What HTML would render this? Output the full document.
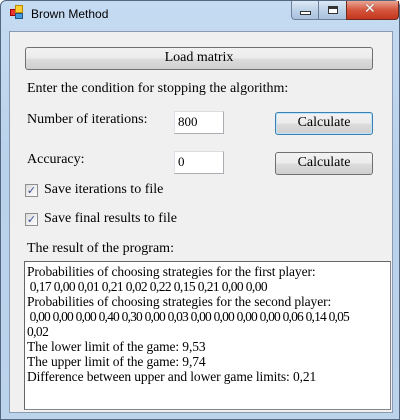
<!DOCTYPE html><html><head><style>
*{margin:0;padding:0;box-sizing:border-box}
body{width:400px;height:420px;overflow:hidden;background:#fff;font-family:"Liberation Serif","Times New Roman",serif;font-size:14px;color:#000}
.win{position:absolute;left:0;top:0;width:400px;height:420px;background:linear-gradient(#c5dbf2,#b9d1ea 40%,#bcd3ec);border:1px solid #55677f;border-radius:6px 6px 0 0}
.client{position:absolute;left:8px;top:30px;width:384px;height:382px;background:#f0f0f0;border:1px solid #8a9bb0}
.t{position:absolute;white-space:nowrap}
.btn{position:absolute;border:1px solid #707070;border-radius:3px;background:linear-gradient(#f2f2f2 0,#ebebeb 50%,#dddddd 50%,#cfcfcf);text-align:center;line-height:20px}
.inp{position:absolute;background:#fff;border:1px solid #abadb3;border-top-color:#dcdcdc;border-left-color:#e2e3ea;padding-left:3px;line-height:20px;font-size:13px}
.cb{position:absolute;width:13px;height:13px;border:1px solid #8f8f8f;background:linear-gradient(135deg,#dcdcdc,#fff);font:bold 11px "DejaVu Sans",sans-serif;color:#3a4f97;line-height:11px;text-align:center}
.ta{position:absolute;left:23px;top:260px;width:367px;height:149px;background:#fff;border:1px solid #828790;border-top-color:#666;border-left-color:#666;padding:2px 0 0 2px;line-height:15px;font-size:13.5px;letter-spacing:-0.1px;white-space:nowrap;overflow:hidden}
.n{letter-spacing:-0.6px}
.m{letter-spacing:-0.8px}
</style></head><body>
<div class="win">
<div style="position:absolute;left:9px;top:8px;width:7px;height:7px;background:#e33;border:1px solid #900"></div>
<div style="position:absolute;left:14px;top:4px;width:8px;height:8px;background:#fc3;border:1px solid #b80"></div>
<div style="position:absolute;left:14px;top:12px;width:8px;height:6px;background:#49d;border:1px solid #258"></div>
<div class="t" style="left:30px;top:6px;font:12px 'Liberation Sans',sans-serif;color:#000">Brown Method</div>
<div style="position:absolute;left:290px;top:0;width:56px;height:19px;border:1px solid #6c7f99;border-top:none;border-radius:0 0 0 4px;background:linear-gradient(#dce8f5,#bed2e8 50%,#a9c2de)"></div>
<div style="position:absolute;left:317px;top:0;width:1px;height:19px;background:#6c7f99"></div>
<div style="position:absolute;left:299px;top:10px;width:11px;height:4px;border:1px solid #333;background:#fff"></div>
<div style="position:absolute;left:327px;top:5px;width:10px;height:8px;border:1px solid #333;background:#fff;box-shadow:inset 0 2px 0 #333"></div>
<div style="position:absolute;left:345px;top:0;width:53px;height:19px;border:1px solid #6d2a1f;border-top:none;border-radius:0 0 4px 0;background:linear-gradient(#e8a593,#d5553c 50%,#c3371d)"></div>
<div class="t" style="left:363px;top:0px;font:bold 14px 'DejaVu Sans',sans-serif;color:#fff;text-shadow:0 0 1px #333">✕</div>
<div class="client">
<div class="btn" style="left:15px;top:15px;width:348px;height:23px">Load matrix</div>
<div class="t" style="left:17px;top:49px">Enter the condition for stopping the algorithm:</div>
<div class="t" style="left:17px;top:80px">Number of iterations:</div>
<div class="inp" style="left:164px;top:79px;width:50px;height:23px">800</div>
<div class="btn" style="left:265px;top:80px;width:98px;height:23px;border-color:#3c7fb1;box-shadow:inset 0 0 0 1px #bde4f8">Calculate</div>
<div class="t" style="left:17px;top:120px">Accuracy:</div>
<div class="inp" style="left:164px;top:119px;width:50px;height:23px">0</div>
<div class="btn" style="left:265px;top:120px;width:98px;height:23px">Calculate</div>
<div class="cb" style="left:15px;top:152px">✓</div>
<div class="t" style="left:34px;top:150px">Save iterations to file</div>
<div class="cb" style="left:15px;top:181px">✓</div>
<div class="t" style="left:34px;top:179px">Save final results to file</div>
<div class="t" style="left:17px;top:209px">The result of the program:</div>
</div>
<div class="ta">Probabilities of choosing strategies for the first player:<br><span class="n">&nbsp;0,17 0,00 0,01 0,21 0,02 0,22 0,15 0,21 0,00 0,00</span><br>Probabilities of choosing strategies for the second player:<br><span class="m">&nbsp;0,00 0,00 0,00 0,40 0,30 0,00 0,03 0,00 0,00 0,00 0,00 0,06 0,14 0,05</span><br><span class="n">0,02</span><br>The lower limit of the game: 9,53<br>The upper limit of the game: 9,74<br>Difference between upper and lower game limits: 0,21</div>
</div>
</body></html>
